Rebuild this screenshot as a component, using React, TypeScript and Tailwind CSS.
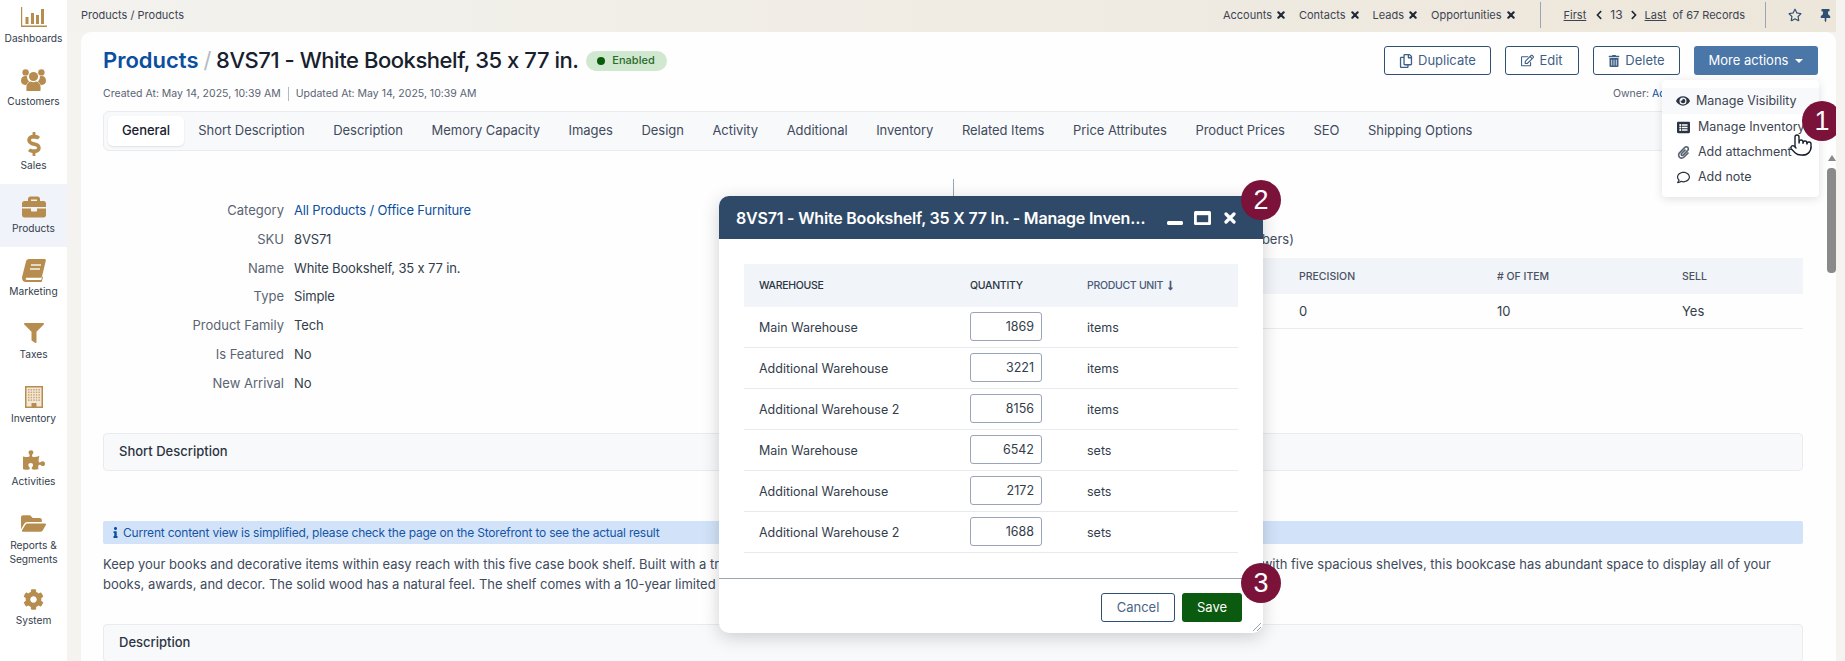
import type { ReactNode } from "react";
import { Pointer } from "lucide-react";
import {
  FaBriefcase,
  FaChevronLeft,
  FaChevronRight,
  FaCog,
  FaDollarSign,
  FaEye,
  FaFilter,
  FaFolderOpen,
  FaInfo,
  FaListAlt,
  FaLongArrowAltDown,
  FaPaperclip,
  FaPuzzlePiece,
  FaRegComment,
  FaRegCopy,
  FaRegEdit,
  FaRegStar,
  FaThumbtack,
  FaTrashAlt,
  FaWindowMinimize,
} from "react-icons/fa";

function ChartIcon() {
  return (
    <svg width="26" height="20" viewBox="0 0 26 20" fill="#b78d4f">
      <path d="M0 0h1.2v18.6H26V20H0z" />
      <rect x="4.5" y="10" width="3" height="7" />
      <rect x="10" y="6" width="3" height="11" />
      <rect x="15" y="8" width="3" height="9" />
      <rect x="20" y="2" width="3" height="15" />
    </svg>
  );
}

function UsersIcon() {
  return (
    <svg width="25" height="22" viewBox="0 0 25 22" fill="#b78d4f">
      <circle cx="12.5" cy="7.5" r="4.6" />
      <circle cx="4.6" cy="3.4" r="3.2" />
      <circle cx="20.4" cy="3.4" r="3.2" />
      <path d="M0 12c0-3.2 1.6-5 4.5-5 .6 0 1.1.1 1.6.3-.2 2 .7 4 2.2 5.2C6.7 13.500 5.600 15 5.200 16.200 2 16 0 14.800 0 12z" />
      <path d="M25 12c0-3.200-1.600-5-4.500-5-.6 0-1.100.1-1.600.3.2 2-.7 4-2.200 5.200 1.600 1 2.700 2.500 3.100 3.700C23 16 25 14.800 25 12z" />
      <path d="M6.400 22c-.6 0-1-.4-1-1v-3c0-3 2-5.200 4.400-5.600 1.600 1 3.800 1 5.400 0 2.400.4 4.400 2.600 4.400 5.600v3c0 .6-.4 1-1 1z" />
    </svg>
  );
}

function BookIcon() {
  return (
    <svg width="24" height="23" viewBox="0 0 24 23">
      <path
        fill="#b78d4f"
        d="M7 0h15.500c1 0 1.500.8 1.300 1.700L20 17.500c-.2.8-.8 1.200-1.500 1.200H5c-1.800 0-1.800 2.300 0 2.300h14.200l.9-3.600.9.6-1 4c-.1.600-.6 1-1.200 1H4C1 23-.5 20.500.2 17.500L4 2.500C4.400 1 5.500 0 7 0z"
      />
      <path stroke="#f7f1e6" strokeWidth="1.500" d="M9 6h10M8 10h10" />
    </svg>
  );
}

function BuildingIcon() {
  const cells = [];
  for (let r = 0; r < 5; r++) {
    for (let c = 0; c < 5; c++) {
      cells.push(<rect key={`${r}-${c}`} x={3 + c * 2.6} y={3 + r * 2.6} width="1.5" height="1.5" fill="#c9a571" />);
    }
  }
  return (
    <svg width="18" height="22" viewBox="0 0 18 22">
      <rect width="18" height="22" fill="#b78d4f" />
      <rect x="1.5" y="1.5" width="15" height="19" fill="#f3e8d8" />
      {cells}
      <rect x="6.5" y="17" width="5" height="5" fill="#b78d4f" />
    </svg>
  );
}

function MaximizeIcon() {
  return (
    <svg width="17" height="14" viewBox="0 0 17 14" className="ml-[11px]">
      <rect width="17" height="14" rx="1.500" fill="#ffffff" />
      <rect x="2.800" y="4.200" width="11.400" height="7" fill="#2f4a68" />
    </svg>
  );
}

// FontAwesome 4 style close mark, heavier than the one in the v5 set
function CloseIcon({ size, className }: { size: number; className?: string }) {
  return (
    <svg width={size} height={size} viewBox="0 0 12 12" className={className} stroke="currentColor" strokeWidth="3.200" strokeLinecap="round">
      <path d="M2 2l8 8M10 2l-8 8" />
    </svg>
  );
}

const navItems: { label: ReactNode; icon: ReactNode; active?: boolean; tall?: boolean }[] = [
  { label: "Dashboards", icon: <ChartIcon /> },
  { label: "Customers", icon: <UsersIcon /> },
  { label: "Sales", icon: <FaDollarSign size={24} /> },
  { label: "Products", icon: <FaBriefcase size={24} />, active: true },
  { label: "Marketing", icon: <BookIcon /> },
  { label: "Taxes", icon: <FaFilter size={20} /> },
  { label: "Inventory", icon: <BuildingIcon /> },
  { label: "Activities", icon: <FaPuzzlePiece size={22} /> },
  { label: <>Reports &<br />Segments</>, icon: <FaFolderOpen size={25} />, tall: true },
  { label: "System", icon: <FaCog size={21} /> },
];

const tabs = [
  "General",
  "Short Description",
  "Description",
  "Memory Capacity",
  "Images",
  "Design",
  "Activity",
  "Additional",
  "Inventory",
  "Related Items",
  "Price Attributes",
  "Product Prices",
  "SEO",
  "Shipping Options",
];

const fields: [string, string][] = [
  ["Category", "All Products / Office Furniture"],
  ["SKU", "8VS71"],
  ["Name", "White Bookshelf, 35 x 77 in."],
  ["Type", "Simple"],
  ["Product Family", "Tech"],
  ["Is Featured", "No"],
  ["New Arrival", "No"],
];

const inventory: [string, string, string][] = [
  ["Main Warehouse", "1869", "items"],
  ["Additional Warehouse", "3221", "items"],
  ["Additional Warehouse 2", "8156", "items"],
  ["Main Warehouse", "6542", "sets"],
  ["Additional Warehouse", "2172", "sets"],
  ["Additional Warehouse 2", "1688", "sets"],
];

function Sidebar() {
  return (
    <aside className="w-[67px] shrink-0 bg-white overflow-hidden">
      <div className="-mt-[6px]">
        {navItems.map((item, i) => (
          <div
            key={i}
            className={`flex flex-col items-center pt-[9px] text-center ${item.tall ? "h-[76px]" : "h-[63.3px]"} ${
              item.active ? "bg-[#f0f3f9]" : ""
            }`}
          >
            <div className="flex h-[28px] items-center justify-center text-[#b78d4f]">{item.icon}</div>
            <div className={`mt-px text-[10.2px] text-[#333d4b] ${item.tall ? "leading-[14px]" : "leading-[12px]"}`}>{item.label}</div>
          </div>
        ))}
      </div>
    </aside>
  );
}

function TopBar() {
  const shortcut = (name: string) => (
    <span className="flex items-center gap-[5px]">
      {name}
      <CloseIcon size={8} className="text-[#1f2937]" />
    </span>
  );
  return (
    <header className="flex h-[32px] shrink-0 items-center bg-gradient-to-r from-[#f3f2ee] to-[#ede6da] pb-[2px] pl-[14px] pr-[4px] text-[11px] text-[#3c4452]">
      <span>Products / Products</span>
      <div className="ml-auto flex items-center gap-[14px]">
        {shortcut("Accounts")}
        {shortcut("Contacts")}
        {shortcut("Leads")}
        {shortcut("Opportunities")}
      </div>
      <div className="ml-[25px] h-[26px] w-px bg-[#9aa5b5]" />
      <div className="ml-[23px] flex items-center">
        <span className="underline">First</span>
        <FaChevronLeft size={10} className="ml-[8px] text-[#1f2937]" />
        <span className="ml-[6px] text-[12px]">13</span>
        <FaChevronRight size={10} className="ml-[6px] text-[#1f2937]" />
        <span className="ml-[6px] underline">Last</span>
        <span className="ml-[6px]">of 67 Records</span>
      </div>
      <div className="ml-[20px] h-[26px] w-px bg-[#9aa5b5]" />
      <FaRegStar size={14} className="ml-[22px] text-[#2f4f75]" />
      <FaThumbtack size={13} className="ml-[17px] text-[#2f4f75]" />
    </header>
  );
}

function OutlineButton({ icon, label, width }: { icon: ReactNode; label: string; width: string }) {
  return (
    <button
      className={`flex h-[29px] items-center justify-center gap-[5px] rounded-[3px] border border-[#2f4f75] bg-white text-[13px] text-[#3f5f85] ${width}`}
    >
      {icon}
      {label}
    </button>
  );
}

function Dropdown() {
  return (
    <div className="absolute left-[1581px] top-[48px] z-20 w-[157px] rounded-[4px] bg-white pt-[8px] text-[12.5px] text-[#3c4452] shadow-[0_2px_10px_rgba(0,0,0,0.12)]">
      <div className="flex h-[26px] items-center gap-[6px] bg-[#f8f9fb] pl-[14px]">
        <FaEye size={14} className="text-[#2b3442]" /> Manage Visibility
      </div>
      <div className="flex h-[26px] items-center gap-[8px] pl-[15px]">
        <FaListAlt size={13} className="text-[#2b3442]" /> Manage Inventory
      </div>
      <div className="flex h-[25px] items-center gap-[8px] pl-[15px]">
        <FaPaperclip size={13} className="text-[#5a6472]" /> Add attachment
      </div>
      <div className="flex h-[26px] items-center gap-[8px] pl-[15px] pb-px">
        <FaRegComment size={13} className="text-[#2b3442]" /> Add note
      </div>
      <div className="h-[6px]" />
    </div>
  );
}

function Step({ n, className }: { n: number; className: string }) {
  return (
    <div
      className={`absolute z-40 flex h-[40px] w-[40px] items-center justify-center rounded-full bg-[#7a1239] font-['Liberation_Sans',sans-serif] text-[27px] text-white ${className}`}
    >
      {n}
    </div>
  );
}

function InventoryModal() {
  return (
    <div className="absolute left-[638px] top-[164px] z-30 flex h-[437px] w-[544px] flex-col rounded-[10px] bg-white shadow-[0_4px_18px_rgba(0,0,0,0.18)]">
      <div className="flex h-[43px] shrink-0 items-center rounded-t-[10px] bg-[#2f4a68] pl-[17px] pr-[27px] text-white">
        <span className="w-[412px] truncate text-[16px] font-semibold tracking-[-0.2px]">
          8VS71 - White Bookshelf, 35 X 77 In. - Manage Inventory
        </span>
        <FaWindowMinimize size={16} className="ml-auto" />
        <MaximizeIcon />
        <CloseIcon size={12} className="ml-[13px]" />
      </div>
      <div className="px-[25px] pt-[25px]">
        <div className="grid h-[43px] grid-cols-[226px_117px_1fr] items-center bg-[#f1f4f9] text-[10.5px] font-medium tracking-[-0.3px] text-[#2b3442]">
          <span className="pl-[15px]">WAREHOUSE</span>
          <span>QUANTITY</span>
          <span className="flex items-center gap-[2px] text-[#4a5a78]">
            PRODUCT UNIT <FaLongArrowAltDown size={11} />
          </span>
        </div>
        {inventory.map(([warehouse, qty, unit], i) => (
          <div
            key={i}
            className="grid h-[41px] grid-cols-[226px_117px_1fr] items-center border-b border-[#e8eaee] pt-[2px] text-[12.5px] text-[#333d4b]"
          >
            <span className="pl-[15px]">{warehouse}</span>
            <input
              readOnly
              value={qty}
              className="-mt-[3px] h-[29px] w-[72px] rounded-[3px] border border-[#9aa3b8] bg-white pr-[7px] text-right text-[12.5px] outline-none"
            />
            <span>{unit}</span>
          </div>
        ))}
      </div>
      <div className="mt-[25px] border-t border-[#9aa3b8]" />
      <div className="flex justify-end gap-[7px] pr-[21px] pt-[14px]">
        <button className="h-[29px] w-[74px] rounded-[3px] border border-[#2f4f75] bg-white text-[13px] text-[#4a6585]">Cancel</button>
        <button className="h-[29px] w-[60px] rounded-[3px] bg-[#0a5a0f] text-[13px] text-white">Save</button>
      </div>
      <svg className="absolute bottom-[2px] right-[2px]" width="9" height="9" viewBox="0 0 9 9" stroke="#9aa3ad" strokeWidth="1">
        <path d="M1 9L9 1M5 9L9 5" />
      </svg>
    </div>
  );
}

function ProductCard() {
  return (
    <section className="relative ml-[14px] flex-1 overflow-hidden rounded-t-[10px] bg-[#fefefe] pl-[22px] pr-[33px]">
      <div className="flex h-[43px] items-end justify-between pt-[14px]">
        <h1 className="flex items-center text-[22px] font-medium leading-[29px] tracking-[-0.45px] text-[#17202c]">
          <span className="font-semibold tracking-normal text-[#0b4fa0]">Products</span>
          <span className="mx-[5px] font-normal text-[#b5bac2]">/</span>
          <span>8VS71 - White Bookshelf, 35 x 77 in.</span>
          <span className="ml-[7px] flex h-[20px] w-[81px] items-center justify-center gap-[7px] rounded-full bg-[#cfe8cf] text-[11px] font-medium tracking-normal text-[#2a6a2a]">
            <span className="h-[8px] w-[8px] rounded-full bg-[#0a5c0a]" />
            Enabled
          </span>
        </h1>
        <div className="flex items-center gap-[14px] self-end">
          <OutlineButton width="w-[107px]" icon={<FaRegCopy size={14} />} label="Duplicate" />
          <OutlineButton width="w-[74px]" icon={<FaRegEdit size={13} />} label="Edit" />
          <OutlineButton width="w-[87px]" icon={<FaTrashAlt size={12} />} label="Delete" />
          <button className="-mr-[15px] flex h-[29px] w-[124px] items-center justify-center gap-[7px] rounded-[3px] bg-[#4a76a8] text-[13px] text-white">
            More actions
            <span className="h-0 w-0 border-x-[4px] border-t-[4px] border-x-transparent border-t-white" />
          </button>
        </div>
      </div>

      <div className="mt-[12px] flex items-center text-[10.5px] leading-[14px] text-[#5a6472]">
        <span>Created At: May 14, 2025, 10:39 AM</span>
        <span className="mx-[7px] h-[14px] w-px bg-[#b5bac2]" />
        <span>Updated At: May 14, 2025, 10:39 AM</span>
        <span className="ml-auto -mr-[15px] w-[205px]">
          Owner: <span className="text-[#0b4fa0]">Admin</span>
        </span>
      </div>

      <nav className="mt-[10px] flex h-[40px] items-center rounded-[6px] border border-[#e9ebef] bg-[#f8f9fb] pl-[4px] text-[13px] tracking-[-0.05px] text-[#3f4b5c]">
        {tabs.map((tab, i) => (
          <span
            key={tab}
            className={
              i === 0
                ? "flex h-[30px] w-[76px] items-center justify-center rounded-[5px] bg-white font-medium text-[#17202c] shadow-[0_1px_2px_rgba(0,0,0,0.1)]"
                : "px-[14.3px]"
            }
          >
            {tab}
          </span>
        ))}
      </nav>

      <div className="mt-[28px] flex h-[253px]">
        <dl className="w-[850px] pt-[17px] text-[13px] leading-[28.8px]">
          {fields.map(([name, value], i) => (
            <div key={name} className="flex">
              <dt className="w-[181px] text-right text-[#5a6472]">{name}</dt>
              <dd className={`ml-[10px] tracking-[-0.15px] ${i === 0 ? "text-[#0b4fa0]" : "text-[#333d4b]"}`}>{value}</dd>
            </div>
          ))}
        </dl>
        <div className="h-[22px] w-px bg-[#9aa5b5]" />
        <div className="flex-1 pl-[15px] pt-[50px] text-[13px] text-[#3f4b5c]">
          <p className="h-[20px] pl-[160px] leading-[20px]">Product Units (in numbers)</p>
          <div className="mt-[9px] grid h-[36px] grid-cols-[330px_198px_185px_1fr] items-center bg-[#f1f4f9] pt-[2px] text-[10.5px] font-medium text-[#4a5160]">
            <span />
            <span className="col-start-2">PRECISION</span>
            <span># OF ITEM</span>
            <span>SELL</span>
          </div>
          <div className="grid h-[35px] grid-cols-[330px_198px_185px_1fr] items-center border-b border-[#e9ebef] pt-px text-[13px] text-[#333d4b]">
            <span />
            <span>0</span>
            <span>10</span>
            <span>Yes</span>
          </div>
        </div>
      </div>

      <div className="mt-px flex h-[38px] items-center rounded-[4px] border border-[#e9ebef] bg-[#f8f9fb] pl-[15px] text-[13px] font-medium text-[#2b3442]">
        Short Description
      </div>

      <div className="mt-[50px] flex h-[23px] items-center gap-[2px] rounded-[2px] bg-[#d2e3f9] pl-[7px] text-[12px] tracking-[-0.2px] text-[#1455a6]">
        <FaInfo size={11} className="text-[#0b4fa0]" />
        Current content view is simplified, please check the page on the Storefront to see the actual result
      </div>

      <p className="mt-[10px] text-[13px] leading-[20px] text-[#3f4b5c]">
        Keep your books and decorative items within easy reach with this five case book shelf. Built with a traditional look and made from sturdy materials that last for many longer years, and made with five spacious shelves, this bookcase has abundant space to display all of your
        <br />
        books, awards, and decor. The solid wood has a natural feel. The shelf comes with a 10-year limited warranty.
      </p>

      <div className="mt-[30px] flex h-[38px] items-center rounded-[4px] border border-[#e9ebef] bg-[#f8f9fb] pl-[15px] text-[13px] font-medium text-[#2b3442]">
        Description
      </div>

      {/* scrollbar */}
      <div className="absolute bottom-0 right-0 top-[123px] z-10 w-[9px]">
        <div className="mx-auto h-0 w-0 border-x-[4.5px] border-b-[6px] border-x-transparent border-b-[#8a8a8a]" />
        <div className="mt-[7px] h-[105px] rounded-[4px] bg-[#8a8a8a]" />
      </div>

      <Dropdown />
      <InventoryModal />
      <Step n={1} className="left-[1721px] top-[69px]" />
      <Step n={2} className="left-[1160px] top-[148px]" />
      <Step n={3} className="left-[1160px] top-[531px]" />
      <Pointer size={24} strokeWidth={1.4} fill="#ffffff" className="absolute left-[1708px] top-[101px] z-30 text-[#17202c]" />
    </section>
  );
}

export default function App() {
  return (
    <div className="flex h-[661px] w-[1845px] overflow-hidden bg-[#f4f3ef] font-['Inter',sans-serif] [font-feature-settings:'calt'_0]">
      <Sidebar />
      <div className="flex min-w-0 flex-1 flex-col pr-[9px]">
        <TopBar />
        <ProductCard />
      </div>
    </div>
  );
}
